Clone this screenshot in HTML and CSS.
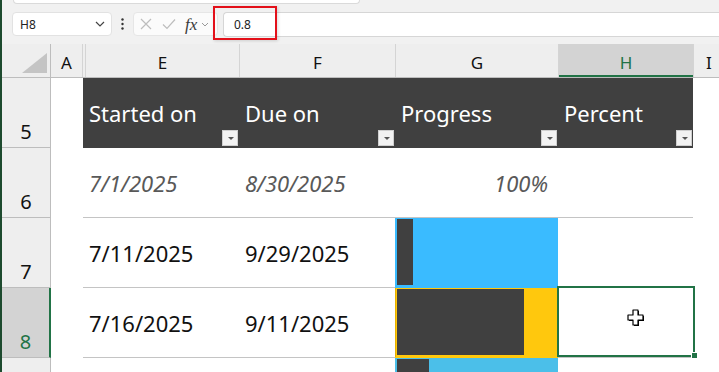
FILE: index.html
```html
<!DOCTYPE html>
<html lang="en">
<head>
  <meta charset="UTF-8">
  <title>Task progress</title>
  <link rel="stylesheet" href="styles.css">
</head>
<body>
<div class="app">
  <div class="ribbon-edge"></div>

  <div class="formula-bar">
    <div class="name-box">
      <span>H8</span>
      <svg width="10" height="6" viewBox="0 0 10 6"><polyline points="1,1 5,5 9,1" fill="none" stroke="#444" stroke-width="1.2"/></svg>
    </div>
    <div class="more">
      <svg width="3" height="12" viewBox="0 0 3 12"><circle cx="1.5" cy="1.5" r="1.2" fill="#333"/><circle cx="1.5" cy="6" r="1.2" fill="#333"/><circle cx="1.5" cy="10.5" r="1.2" fill="#333"/></svg>
    </div>
    <div class="fx-box">
      <svg class="cancel" width="12" height="12" viewBox="0 0 12 12"><path d="M1 1 L11 11 M11 1 L1 11" stroke="#bdbdbd" stroke-width="1.2"/></svg>
      <svg class="enter" width="14" height="12" viewBox="0 0 14 12"><polyline points="1,6.5 5,10.5 13,1.5" fill="none" stroke="#bdbdbd" stroke-width="1.2"/></svg>
      <span class="fx">fx</span>
      <svg class="fx-more" width="8" height="5" viewBox="0 0 8 5"><polyline points="1,1 4,4 7,1" fill="none" stroke="#999" stroke-width="1"/></svg>
    </div>
    <div class="formula-input">0.8</div>
    <div class="highlight"></div>
  </div>

  <div class="col-heads">
    <div class="corner">
      <svg width="48" height="33" viewBox="0 0 48 33"><polygon points="45,9 45,29 20,29" fill="#c4c4c4"/></svg>
    </div>
    <div class="ch col-a">A</div>
    <div class="ch col-hidden"></div>
    <div class="ch col-e">E</div>
    <div class="ch col-f">F</div>
    <div class="ch col-g">G</div>
    <div class="ch col-h active">H</div>
    <div class="ch col-i">I</div>
  </div>

  <div class="row">
    <div class="rh">5</div>
    <div class="a"></div>
    <div class="c th e">Started on<span class="filter"></span></div>
    <div class="c th f">Due on<span class="filter"></span></div>
    <div class="c th g">Progress<span class="filter"></span></div>
    <div class="c th h">Percent<span class="filter"></span></div>
    <div class="rest"></div>
  </div>

  <div class="row">
    <div class="rh">6</div>
    <div class="a"></div>
    <div class="c e muted">7/1/2025</div>
    <div class="c f muted">8/30/2025</div>
    <div class="c g muted right">100%</div>
    <div class="c h"></div>
    <div class="rest"></div>
  </div>

  <div class="row">
    <div class="rh">7</div>
    <div class="a"></div>
    <div class="c e">7/11/2025</div>
    <div class="c f">9/29/2025</div>
    <div class="c g bar blue"><div class="fill" style="width: 10%"></div></div>
    <div class="c h"></div>
    <div class="rest"></div>
  </div>

  <div class="row">
    <div class="rh active">8</div>
    <div class="a"></div>
    <div class="c e">7/16/2025</div>
    <div class="c f">9/11/2025</div>
    <div class="c g bar yellow"><div class="fill" style="width: 80%"></div></div>
    <div class="c h sel">
      <div class="sel-box"><span class="handle"></span></div>
      <svg class="cursor" width="17" height="17" viewBox="0 0 17 17">
        <polygon points="6,1 11,1 11,6 16,6 16,11 11,11 11,16 6,16 6,11 1,11 1,6 6,6" fill="#000" transform="translate(1,1)"/>
        <polygon points="6,1 11,1 11,6 16,6 16,11 11,11 11,16 6,16 6,11 1,11 1,6 6,6" fill="#fff" stroke="#000" stroke-width="1.2" stroke-linejoin="round"/>
      </svg>
    </div>
    <div class="rest"></div>
  </div>

  <!-- row 9 is cut off by the window, only its top shows -->
  <div class="row partial">
    <div class="rh"></div>
    <div class="a"></div>
    <div class="c e"></div>
    <div class="c f"></div>
    <div class="c g bar blue-2"><div class="fill" style="width: 20%"></div></div>
    <div class="c h"></div>
    <div class="rest"></div>
  </div>
</div>
</body>
</html>
```

FILE: styles.css
```css
* {
  box-sizing: border-box;
}

body {
  margin: 0;
  width: 719px;
  height: 372px;
  overflow: hidden;
  font-family: "Noto Sans", sans-serif;
  background-color: #fff;
}

.app {
  height: 372px;
  overflow: hidden;
  border-left: 2px solid #1d4a2e;
  background-color: #f1f1f1;
}

/* toolbar: name box + formula bar */
.ribbon-edge {
  margin-left: 11px;
  width: 347px;
  height: 4px;
  background-color: #fff;
  border: 1px solid #dadada;
  border-top: none;
  border-radius: 0 0 6px 6px;
}

.formula-bar {
  position: relative;
  display: flex;
  align-items: center;
  height: 40px;
  padding: 8px 0 8px 10px;
}

.name-box {
  width: 100px;
  height: 24px;
  display: flex;
  align-items: center;
  justify-content: space-between;
  padding: 0 6px 0 7px;
  background-color: #fff;
  border: 1px solid #e2e2e2;
  border-radius: 4px;
  font-size: 12px;
  color: #222;
}

.more {
  width: 21px;
  display: flex;
  justify-content: center;
}

.fx-box {
  width: 85px;
  height: 24px;
  display: flex;
  align-items: center;
  padding-left: 6px;
  background-color: #fbfbfb;
  border: 1px solid #e6e6e6;
  border-radius: 4px;
}

.fx-box .enter {
  margin-left: 10px;
}

.fx {
  margin-left: 9px;
  font-family: "Liberation Serif", serif;
  font-style: italic;
  font-size: 17px;
  color: #3a3a3a;
  line-height: 1;
}

.fx-box .fx-more {
  margin-left: 4px;
}

.formula-input {
  flex: 1;
  height: 25px;
  margin-left: 5px;
  padding-left: 10px;
  display: flex;
  align-items: center;
  background-color: #fff;
  border: 1px solid #d6d6d6;
  border-right: none;
  border-radius: 4px 0 0 4px;
  font-size: 12px;
  color: #222;
}

.highlight {
  position: absolute;
  left: 211px;
  top: 2px;
  width: 64px;
  height: 34px;
  border: 2px solid #e3101a;
  box-shadow: 1px 1px 3px rgba(0, 0, 0, 0.15);
}

/* column headers */
.col-heads {
  display: flex;
  height: 34px;
  background-color: #eeeeee;
  border-bottom: 1px solid #bdbdbd;
  font-size: 17px;
  line-height: 23px;
  color: #111;
}

.corner {
  width: 49px;
  border-right: 1px solid #bdbdbd;
}

.corner svg {
  display: block;
}

.ch {
  display: flex;
  align-items: flex-end;
  justify-content: center;
  padding-bottom: 3px;
  border-right: 1px solid #d4d4d4;
}

.col-a { width: 32px; }
.col-hidden { width: 3px; }
.col-e { width: 154px; }
.col-f { width: 156px; }
.col-g { width: 163px; }
.col-h { width: 135px; }

.col-i {
  flex: 1;
  justify-content: flex-start;
  padding-left: 12px;
  border-right: none;
}

.ch.active {
  background-color: #d3d3d3;
  color: #217346;
  box-shadow: inset 0 -2px 0 #217346;
}

/* rows */
.row {
  display: flex;
  height: 70px;
  background-color: #fff;
}

.row.partial {
  height: 14px;
}

.row.partial .rh,
.row.partial .c {
  border-bottom: none;
}

.rh {
  width: 49px;
  display: flex;
  align-items: flex-end;
  justify-content: center;
  padding-bottom: 2px;
  background-color: #eeeeee;
  border-right: 1px solid #bdbdbd;
  border-bottom: 1px solid #bdbdbd;
  font-size: 20px;
  line-height: 27px;
  color: #111;
}

.rh.active {
  background-color: #d3d3d3;
  color: #217346;
  border-right: 2px solid #217346;
}

.a {
  width: 32px;
}

.rest {
  flex: 1;
}

.c {
  display: flex;
  align-items: center;
  padding: 1px 6px 0;
  border-bottom: 1px solid #c4c4c4;
  font-size: 22px;
  line-height: 30px;
  color: #111;
  white-space: nowrap;
}

.c.e { width: 156px; }
.c.f { width: 156px; }
.c.g { width: 163px; }
.c.h { width: 135px; }

.c.th {
  position: relative;
  padding-top: 0;
  background-color: #404040;
  border-bottom: none;
  color: #fff;
}

.filter {
  position: absolute;
  right: 1px;
  bottom: 2px;
  width: 16px;
  height: 16px;
  background-color: #f2f2f2;
  border: 1px solid #cfcfcf;
}

.filter::after {
  content: "";
  position: absolute;
  left: 5px;
  top: 6px;
  border-left: 3px solid transparent;
  border-right: 3px solid transparent;
  border-top: 3px solid #555;
}

.muted {
  font-style: italic;
  color: #595959;
}

.right {
  justify-content: flex-end;
  padding-right: 10px;
}

/* data bars */
.bar {
  padding: 1px 2px 2px;
  align-items: stretch;
}

.row.partial .bar {
  padding-bottom: 0;
}

.bar .fill {
  background-color: #404040;
}

.blue {
  background-color: #3abbff;
  border-bottom-color: #3abbff;
}

.yellow {
  background-color: #ffc80d;
  border-bottom-color: #ffc80d;
  box-shadow: inset 1px 0 0 #e6b000, inset -1px 0 0 #e6b000;
}

.blue-2 {
  background-color: #4bbfe9;
}

/* selected cell H8 */
.sel {
  position: relative;
}

.sel-box {
  position: absolute;
  left: -1px;
  top: -2px;
  right: -2px;
  bottom: 0;
  border: 2px solid #217346;
}

.handle {
  position: absolute;
  right: -5px;
  bottom: -4px;
  width: 7px;
  height: 7px;
  background-color: #217346;
  border: 1px solid #fff;
}

.cursor {
  position: absolute;
  left: 69px;
  top: 21px;
}
```
